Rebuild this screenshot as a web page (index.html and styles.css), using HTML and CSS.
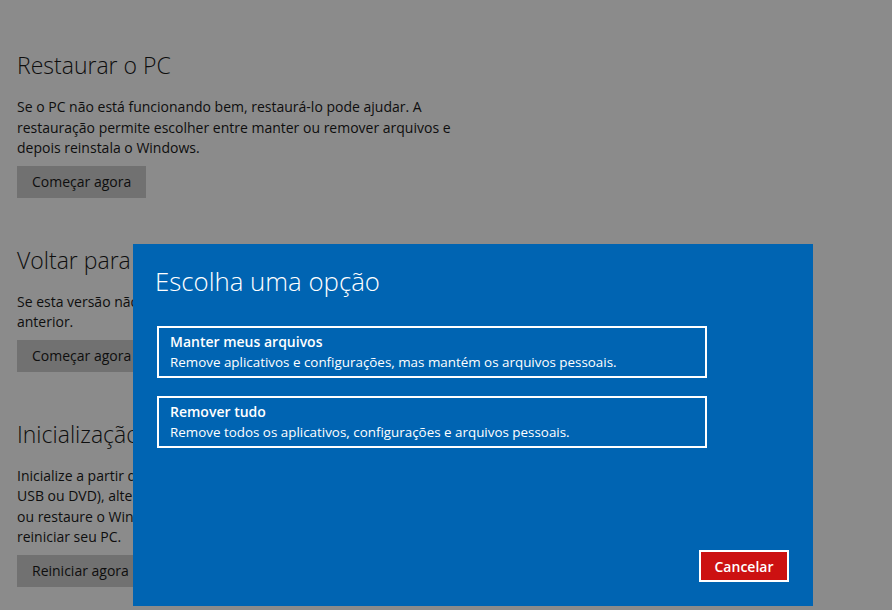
FILE: index.html
```html
<!DOCTYPE html>
<html lang="pt-BR">
<head>
<meta charset="utf-8">
<title>Recuperação</title>
<link rel="stylesheet" href="styles.css">
</head>
<body>
<main class="page">
  <section class="section">
    <h2 class="section-title">Restaurar o PC</h2>
    <p class="section-text">Se o PC não está funcionando bem, restaurá-lo pode ajudar. A<br>restauração permite escolher entre manter ou remover arquivos e<br>depois reinstala o Windows.</p>
    <button class="btn">Começar agora</button>
  </section>
  <section class="section">
    <h2 class="section-title">Voltar para a versão anterior do Windows 10</h2>
    <p class="section-text">Se esta versão não estiver funcionando, tente voltar para uma<br>anterior.</p>
    <button class="btn">Começar agora</button>
  </section>
  <section class="section">
    <h2 class="section-title">Inicialização avançada</h2>
    <p class="section-text">Inicialize a partir de um dispositivo ou disco (como uma unidade<br>USB ou DVD), altere as configurações de inicialização do Windows<br>ou restaure o Windows a partir de uma imagem do sistema. Isso vai<br>reiniciar seu PC.</p>
    <button class="btn">Reiniciar agora</button>
  </section>
</main>

<div class="dialog" role="dialog" aria-labelledby="dlg-title">
  <h1 class="dialog-title" id="dlg-title">Escolha uma opção</h1>
  <div class="options">
    <button class="option">
      <span class="option-name">Manter meus arquivos</span>
      <span class="option-desc">Remove aplicativos e configurações, mas mantém os arquivos pessoais.</span>
    </button>
    <button class="option">
      <span class="option-name">Remover tudo</span>
      <span class="option-desc">Remove todos os aplicativos, configurações e arquivos pessoais.</span>
    </button>
  </div>
  <div class="dialog-footer">
    <button class="cancel">Cancelar</button>
  </div>
</div>
</body>
</html>
```

FILE: styles.css
```css
* {
  box-sizing: border-box;
}

html, body {
  margin: 0;
  padding: 0;
  height: 100%;
}

body {
  background: #8b8b8b;
  font-family: "Open Sans", "Noto Sans", sans-serif;
  color: #0e0e0e;
  overflow: hidden;
}

.page {
  padding: 51px 0 0 17px;
  display: flex;
  flex-direction: column;
  gap: 48px;
}

.section {
  display: flex;
  flex-direction: column;
  align-items: flex-start;
}

.section-title {
  margin: 0 0 18px;
  font-size: 23px;
  font-weight: 300;
  line-height: 28px;
  white-space: nowrap;
}

.section-text {
  margin: 0 0 7px;
  font-size: 14px;
  line-height: 20.5px;
  white-space: nowrap;
}

.btn {
  height: 32px;
  padding: 0 15px;
  border: none;
  background: #717171;
  color: #0e0e0e;
  font-family: inherit;
  font-size: 14px;
}

.dialog {
  position: absolute;
  left: 133px;
  top: 244px;
  width: 680px;
  height: 362px;
  background: #0064b2;
  color: #ffffff;
  padding: 19px 24px 24px 22px;
  display: flex;
  flex-direction: column;
}

.dialog-title {
  margin: 0 0 27px;
  font-size: 25.8px;
  font-weight: 300;
  line-height: 36px;
}

.options {
  display: flex;
  flex-direction: column;
  gap: 18px;
  padding-left: 2px;
}

.option {
  width: 550px;
  height: 52px;
  border: 2px solid #ffffff;
  background: transparent;
  color: #ffffff;
  font-family: inherit;
  text-align: left;
  padding: 3px 11px;
  display: flex;
  flex-direction: column;
  justify-content: center;
}

.option-name {
  font-size: 14px;
  font-weight: 600;
  line-height: 20px;
}

.option-desc {
  font-size: 13.4px;
  line-height: 20px;
}

.dialog-footer {
  margin-top: auto;
  display: flex;
  justify-content: flex-end;
}

.cancel {
  width: 90px;
  height: 32px;
  border: 2px solid #ffffff;
  background: #cc1111;
  color: #ffffff;
  font-family: inherit;
  font-size: 14px;
  font-weight: 600;
}
```
